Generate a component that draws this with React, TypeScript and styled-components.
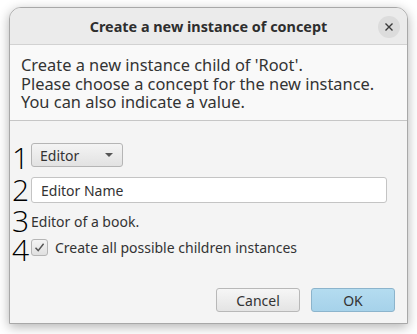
import styled, { createGlobalStyle } from "styled-components";

const GlobalStyle = createGlobalStyle`
    html, body {
        margin: 0;
        background: #ffffff;
    }
`;

const Stage = styled.div`
    width: 417px;
    height: 334px;
    padding: 7px 9px 0 9px;
    box-sizing: border-box;
`;

const Window = styled.div`
    width: 399px;
    height: 317px;
    display: flex;
    flex-direction: column;
    background: #f4f4f4;
    border: 1px solid #a8a8a8;
    border-radius: 12px 12px 0 0;
    box-sizing: border-box;
    box-shadow: 0 3px 12px rgba(0, 0, 0, 0.3);
    font-family: "Noto Sans", "DejaVu Sans", sans-serif;
    overflow: hidden;
`;

const TitleBar = styled.div`
    height: 36px;
    display: flex;
    align-items: center;
    justify-content: center;
    position: relative;
    background: #ebebeb;
    border-bottom: 1px solid #d2d2d2;
`;

const Title = styled.div`
    font-size: 14.4px;
    font-weight: 700;
    color: #2e2e2e;
`;

const CloseButton = styled.div`
    position: absolute;
    right: 7px;
    top: 8px;
    width: 22px;
    height: 22px;
    border-radius: 50%;
    background: #dcdcdc;
    display: flex;
    align-items: center;
    justify-content: center;
`;

const Header = styled.div`
    background: #f9f9f9;
    border-bottom: 1px solid #c6c6c6;
    padding: 11px 11px 8px 11px;
    font-size: 16.4px;
    line-height: 18.7px;
    color: #333333;
`;

const Form = styled.div`
    display: flex;
    flex-direction: column;
    gap: 10px;
    padding: 22px 20px 0 2px;
`;

const Row = styled.div<{ $h: number }>`
    display: flex;
    align-items: center;
    height: ${(p) => p.$h}px;
`;

const Num = styled.div<{ $drop?: number }>`
    width: 19px;
    height: 22px;
    font-family: "Open Sans", sans-serif;
    font-weight: 300;
    font-size: 30px;
    line-height: 22px;
    color: #000000;
    position: relative;
    top: ${(p) => p.$drop ?? 0}px;
`;

const Combo = styled.div`
    width: 92px;
    height: 24px;
    box-sizing: border-box;
    border: 1px solid #b5b5b5;
    border-radius: 3px;
    background: linear-gradient(#f4f4f4, #e2e2e2);
    display: flex;
    align-items: center;
    justify-content: space-between;
    padding: 0 9px 0 8px;
    font-size: 14px;
    color: #333333;
`;

const Arrow = styled.div`
    width: 0;
    height: 0;
    border-left: 4px solid transparent;
    border-right: 4px solid transparent;
    border-top: 4px solid #555555;
`;

const TextField = styled.div`
    flex: 1;
    height: 26px;
    box-sizing: border-box;
    border: 1px solid #c4c4c4;
    border-radius: 3px;
    background: #ffffff;
    display: flex;
    align-items: center;
    padding-left: 9px;
    font-size: 14px;
    color: #333333;
`;

const Label = styled.div`
    font-size: 14px;
    color: #333333;
`;

const Check = styled.div`
    width: 17px;
    height: 17px;
    box-sizing: border-box;
    border: 1px solid #b5b5b5;
    border-radius: 3px;
    background: linear-gradient(#f4f4f4, #e0e0e0);
    display: flex;
    align-items: center;
    justify-content: center;
    margin-right: 7px;
`;

const Footer = styled.div`
    margin-top: auto;
    display: flex;
    justify-content: flex-end;
    gap: 11px;
    padding: 0 12px 11px 0;
`;

const Button = styled.div<{ $primary?: boolean }>`
    width: 84px;
    height: 24px;
    box-sizing: border-box;
    border-radius: 3px;
    border: 1px solid ${(p) => (p.$primary ? "#8cb4cc" : "#b8b8b8")};
    background: ${(p) =>
        p.$primary
            ? "linear-gradient(#b4dcf0, #a6d2ea)"
            : "linear-gradient(#f6f6f6, #e4e4e4)"};
    display: flex;
    align-items: center;
    justify-content: center;
    font-size: 14px;
    color: #333333;
`;

export default function App() {
    return (
        <Stage>
            <GlobalStyle />
            <Window>
                <TitleBar>
                    <Title>Create a new instance of concept</Title>
                    <CloseButton>
                        <svg width="10" height="10" viewBox="0 0 10 10">
                            <path d="M1.5 1.5 L8.5 8.5 M8.5 1.5 L1.5 8.5" stroke="#3a3a3a" strokeWidth="1.4" />
                        </svg>
                    </CloseButton>
                </TitleBar>
                <Header>
                    Create a new instance child of 'Root'.
                    <br />
                    Please choose a concept for the new instance.
                    <br />
                    You can also indicate a value.
                </Header>
                <Form>
                    <Row $h={24}>
                        <Num $drop={3}>1</Num>
                        <Combo>
                            Editor
                            <Arrow />
                        </Combo>
                    </Row>
                    <Row $h={26}>
                        <Num>2</Num>
                        <TextField>Editor Name</TextField>
                    </Row>
                    <Row $h={16}>
                        <Num>3</Num>
                        <Label>Editor of a book.</Label>
                    </Row>
                    <Row $h={17}>
                        <Num $drop={2}>4</Num>
                        <Check>
                            <svg width="13" height="13" viewBox="0 0 13 13">
                                <path d="M2.5 6.8 L5.2 9.6 L10.6 2.8" fill="none" stroke="#555555" strokeWidth="1.5" />
                            </svg>
                        </Check>
                        <Label>Create all possible children instances</Label>
                    </Row>
                </Form>
                <Footer>
                    <Button>Cancel</Button>
                    <Button $primary>OK</Button>
                </Footer>
            </Window>
        </Stage>
    );
}
